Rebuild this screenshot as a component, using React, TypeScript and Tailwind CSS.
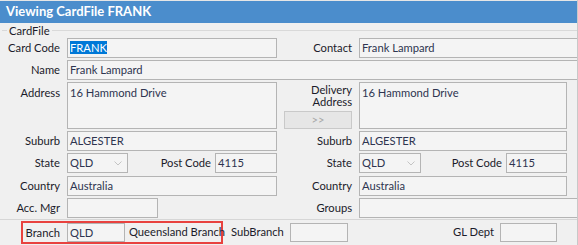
import React from "react";

const Input = ({ w, h = 20, children, cls = "" }: { w?: number | string; h?: number; children?: React.ReactNode; cls?: string }) => (
  <div
    className={`border border-[#b4b4b4] bg-[#f4f4f4] text-[#2e3550] pl-[2px] leading-[18px] overflow-hidden whitespace-nowrap ${cls}`}
    style={{ width: w, height: h }}
  >
    {children}
  </div>
);

const Combo = ({ w }: { w: number }) => (
  <div className="relative border border-[#b4b4b4] bg-[#f4f4f4] text-[#2e3550] pl-[2px] leading-[18px] h-[20px]" style={{ width: w }}>
    QLD
    <svg className="absolute right-[5px] top-[7px]" width="8" height="5" viewBox="0 0 8 5">
      <path d="M0.5 0.5 L4 4 L7.5 0.5" stroke="#c4c4c4" strokeWidth="1" fill="none" />
    </svg>
  </div>
);

const Label = ({ w, children, cls = "" }: { w: number; children: React.ReactNode; cls?: string }) => (
  <div className={`text-right text-[#1b1b2a] leading-[20px] shrink-0 whitespace-nowrap ${cls}`} style={{ width: w }}>
    {children}
  </div>
);

export default function App() {
  return (
    <div className="w-[578px] h-[245px] bg-[#f0f0f0] font-['Lato',sans-serif] text-[11.2px] overflow-hidden relative">
      <div className="h-[1px] bg-[#e6e6e6]" />
      <div className="h-[22px] bg-[#4b8dcc] text-white font-bold text-[13px] leading-[21px] pl-[6px] mr-[1px]">
        Viewing CardFile FRANK
      </div>
      <div className="flex items-center h-[15px]">
        <div className="w-[5px] h-[1px] bg-[#d9d9d9] ml-[2px]" />
        <div className="px-[2px] text-[#1b1b2a] leading-[14px]">CardFile</div>
        <div className="flex-1 h-[1px] bg-[#d9d9d9]" />
      </div>
      {/* Row Card code */}
      <div className="flex h-[20px]">
        <Label w={60}>Card Code</Label>
        <div className="ml-[7px]">
          <Input w={210}>
            <span className="bg-[#0078d7] text-white">FRANK</span>
          </Input>
        </div>
        <Label w={75}>Contact</Label>
        <div className="ml-[7px] flex-1">
          <Input w="100%">Frank Lampard</Input>
        </div>
      </div>
      {/* Name */}
      <div className="flex mt-[2px] h-[20px]">
        <Label w={60}>Name</Label>
        <div className="ml-[7px] flex-1">
          <Input w="100%">Frank Lampard</Input>
        </div>
      </div>
      {/* Address */}
      <div className="flex mt-[2px] h-[47px]">
        <Label w={60} cls="pt-[1px] leading-[14px]">Address</Label>
        <div className="ml-[7px]">
          <Input w={210} h={47} cls="pt-[1px] leading-[14px]">16 Hammond Drive</Input>
        </div>
        <div className="w-[82px] flex flex-col items-start">
          <div className="w-[75px] text-right leading-[12px] text-[#1b1b2a] pt-[2px]">
            Delivery<br />Address
          </div>
          <div className="ml-[7px] mt-[3px] w-[68px] h-[18px] border border-[#c9c9c9] bg-[#e6e6e6] text-[#a8a8a8] text-center leading-[15px]">
            &gt;&gt;
          </div>
        </div>
        <Input w={208} h={47} cls="pt-[1px] leading-[14px]">16 Hammond Drive</Input>
      </div>
      {/* Suburb */}
      <div className="flex mt-[2px] h-[20px]">
        <Label w={60}>Suburb</Label>
        <div className="ml-[7px]">
          <Input w={210}>ALGESTER</Input>
        </div>
        <Label w={75}>Suburb</Label>
        <div className="ml-[7px]">
          <Input w={208}>ALGESTER</Input>
        </div>
      </div>
      {/* State */}
      <div className="flex mt-[2px] h-[20px]">
        <Label w={60}>State</Label>
        <div className="ml-[7px]">
          <Combo w={61} />
        </div>
        <Label w={83}>Post Code</Label>
        <div className="ml-[4px]">
          <Input w={62}>4115</Input>
        </div>
        <Label w={75}>State</Label>
        <div className="ml-[7px]">
          <Combo w={62} />
        </div>
        <Label w={81}>Post Code</Label>
        <div className="ml-[4px]">
          <Input w={61}>4115</Input>
        </div>
      </div>
      {/* Country */}
      <div className="flex mt-[3px] h-[20px]">
        <Label w={60}>Country</Label>
        <div className="ml-[7px]">
          <Input w={210}>Australia</Input>
        </div>
        <Label w={75}>Country</Label>
        <div className="ml-[7px]">
          <Input w={208}>Australia</Input>
        </div>
      </div>
      {/* Acc Mgr */}
      <div className="flex mt-[2px] h-[20px]">
        <Label w={60}>Acc. Mgr</Label>
        <div className="ml-[7px]">
          <Input w={91} />
        </div>
        <div className="w-[119px]" />
        <Label w={75}>Groups</Label>
        <div className="ml-[7px] flex-1">
          <Input w="100%" />
        </div>
      </div>
      <div className="mt-[1px] h-[1px] bg-[#d6d6d6]" />
      {/* Branch row */}
      <div className="flex mt-[1px] h-[23px] items-center">
        <div className="ml-[21px] w-[202px] h-[23px] border-2 border-[#e8423f] flex items-center shrink-0">
          <Label w={37}>Branch</Label>
          <div className="ml-[7px]">
            <Input w={58} h={19} cls="leading-[17px]">QLD</Input>
          </div>
          <div className="ml-[4px] text-[#1b1b2a] whitespace-nowrap">Queensland Branch</div>
        </div>
        <div className="ml-[8px] w-[59px] shrink-0 text-[#1b1b2a]">SubBranch</div>
        <Input w={58} h={19} />
        <div className="w-[152px] shrink-0 text-right pr-[6px] text-[#1b1b2a]">GL Dept</div>
        <Input w={57} h={19} />
      </div>
      <div className="absolute right-0 top-0 w-[1px] h-full bg-[#c8c8c8]" />
    </div>
  );
}
